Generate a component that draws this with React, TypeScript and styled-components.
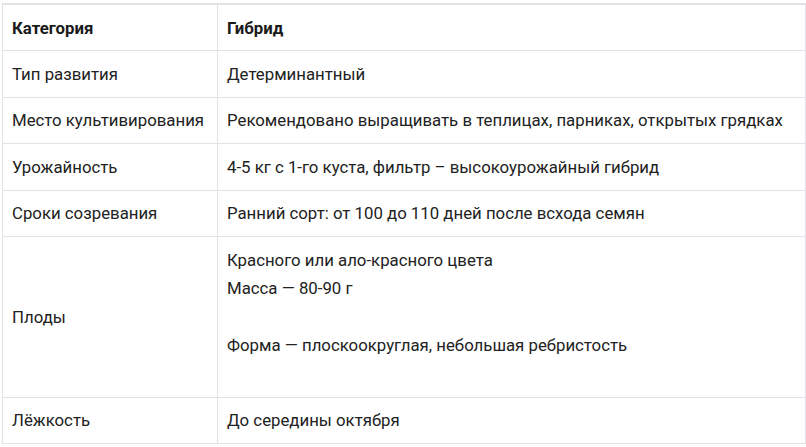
import React from "react";
import styled, { createGlobalStyle } from "styled-components";

const Global = createGlobalStyle`
  html, body { margin: 0; padding: 0; background: #ffffff; }
  body { font-family: Roboto, "Noto Sans", Arial, sans-serif; color: #222222; }
`;

const Page = styled.div`
  padding: 3px 1px 0 2px;
`;

const Table = styled.table`
  width: 803px;
  border-collapse: collapse;
  table-layout: fixed;
  border-top: 2px solid #e1e2e6;
`;

const Col = styled.col<{ $w: number }>`
  width: ${(p) => p.$w}px;
`;

const HeadCell = styled.th`
  text-align: left;
  font-weight: 700;
  font-size: 16.8px;
  line-height: 28px;
  padding: 8.5px 9px;
  border: 1px solid #e1e2e6;
  color: #1a1a1a;
`;

const Cell = styled.td`
  font-size: 16.8px;
  line-height: 28.5px;
  padding: 8.5px 9px;
  border: 1px solid #e1e2e6;
  vertical-align: middle;
  color: #222222;
`;

const Para = styled.p`
  margin: 0;
  min-height: 28.5px;
`;

const rows: { k: string; v: string[] }[] = [
  { k: "Тип развития", v: ["Детерминантный"] },
  { k: "Место культивирования", v: ["Рекомендовано выращивать в теплицах, парниках, открытых грядках"] },
  { k: "Урожайность", v: ["4-5 кг с 1-го куста, фильтр – высокоурожайный гибрид"] },
  { k: "Сроки созревания", v: ["Ранний сорт: от 100 до 110 дней после всхода семян"] },
  {
    k: "Плоды",
    v: ["Красного или ало-красного цвета", "Масса — 80-90 г", "", "Форма — плоскоокруглая, небольшая ребристость", ""],
  },
  { k: "Лёжкость", v: ["До середины октября"] },
];

export default function App() {
  return (
    <Page>
      <Global />
      <Table>
        <colgroup>
          <Col $w={215} />
          <Col $w={588} />
        </colgroup>
        <thead>
          <tr>
            <HeadCell>Категория</HeadCell>
            <HeadCell>Гибрид</HeadCell>
          </tr>
        </thead>
        <tbody>
          {rows.map((r) => (
            <tr key={r.k}>
              <Cell>{r.k}</Cell>
              <Cell>
                {r.v.map((t, i) => (
                  <Para key={i}>{t || "\u00a0"}</Para>
                ))}
              </Cell>
            </tr>
          ))}
        </tbody>
      </Table>
    </Page>
  );
}
